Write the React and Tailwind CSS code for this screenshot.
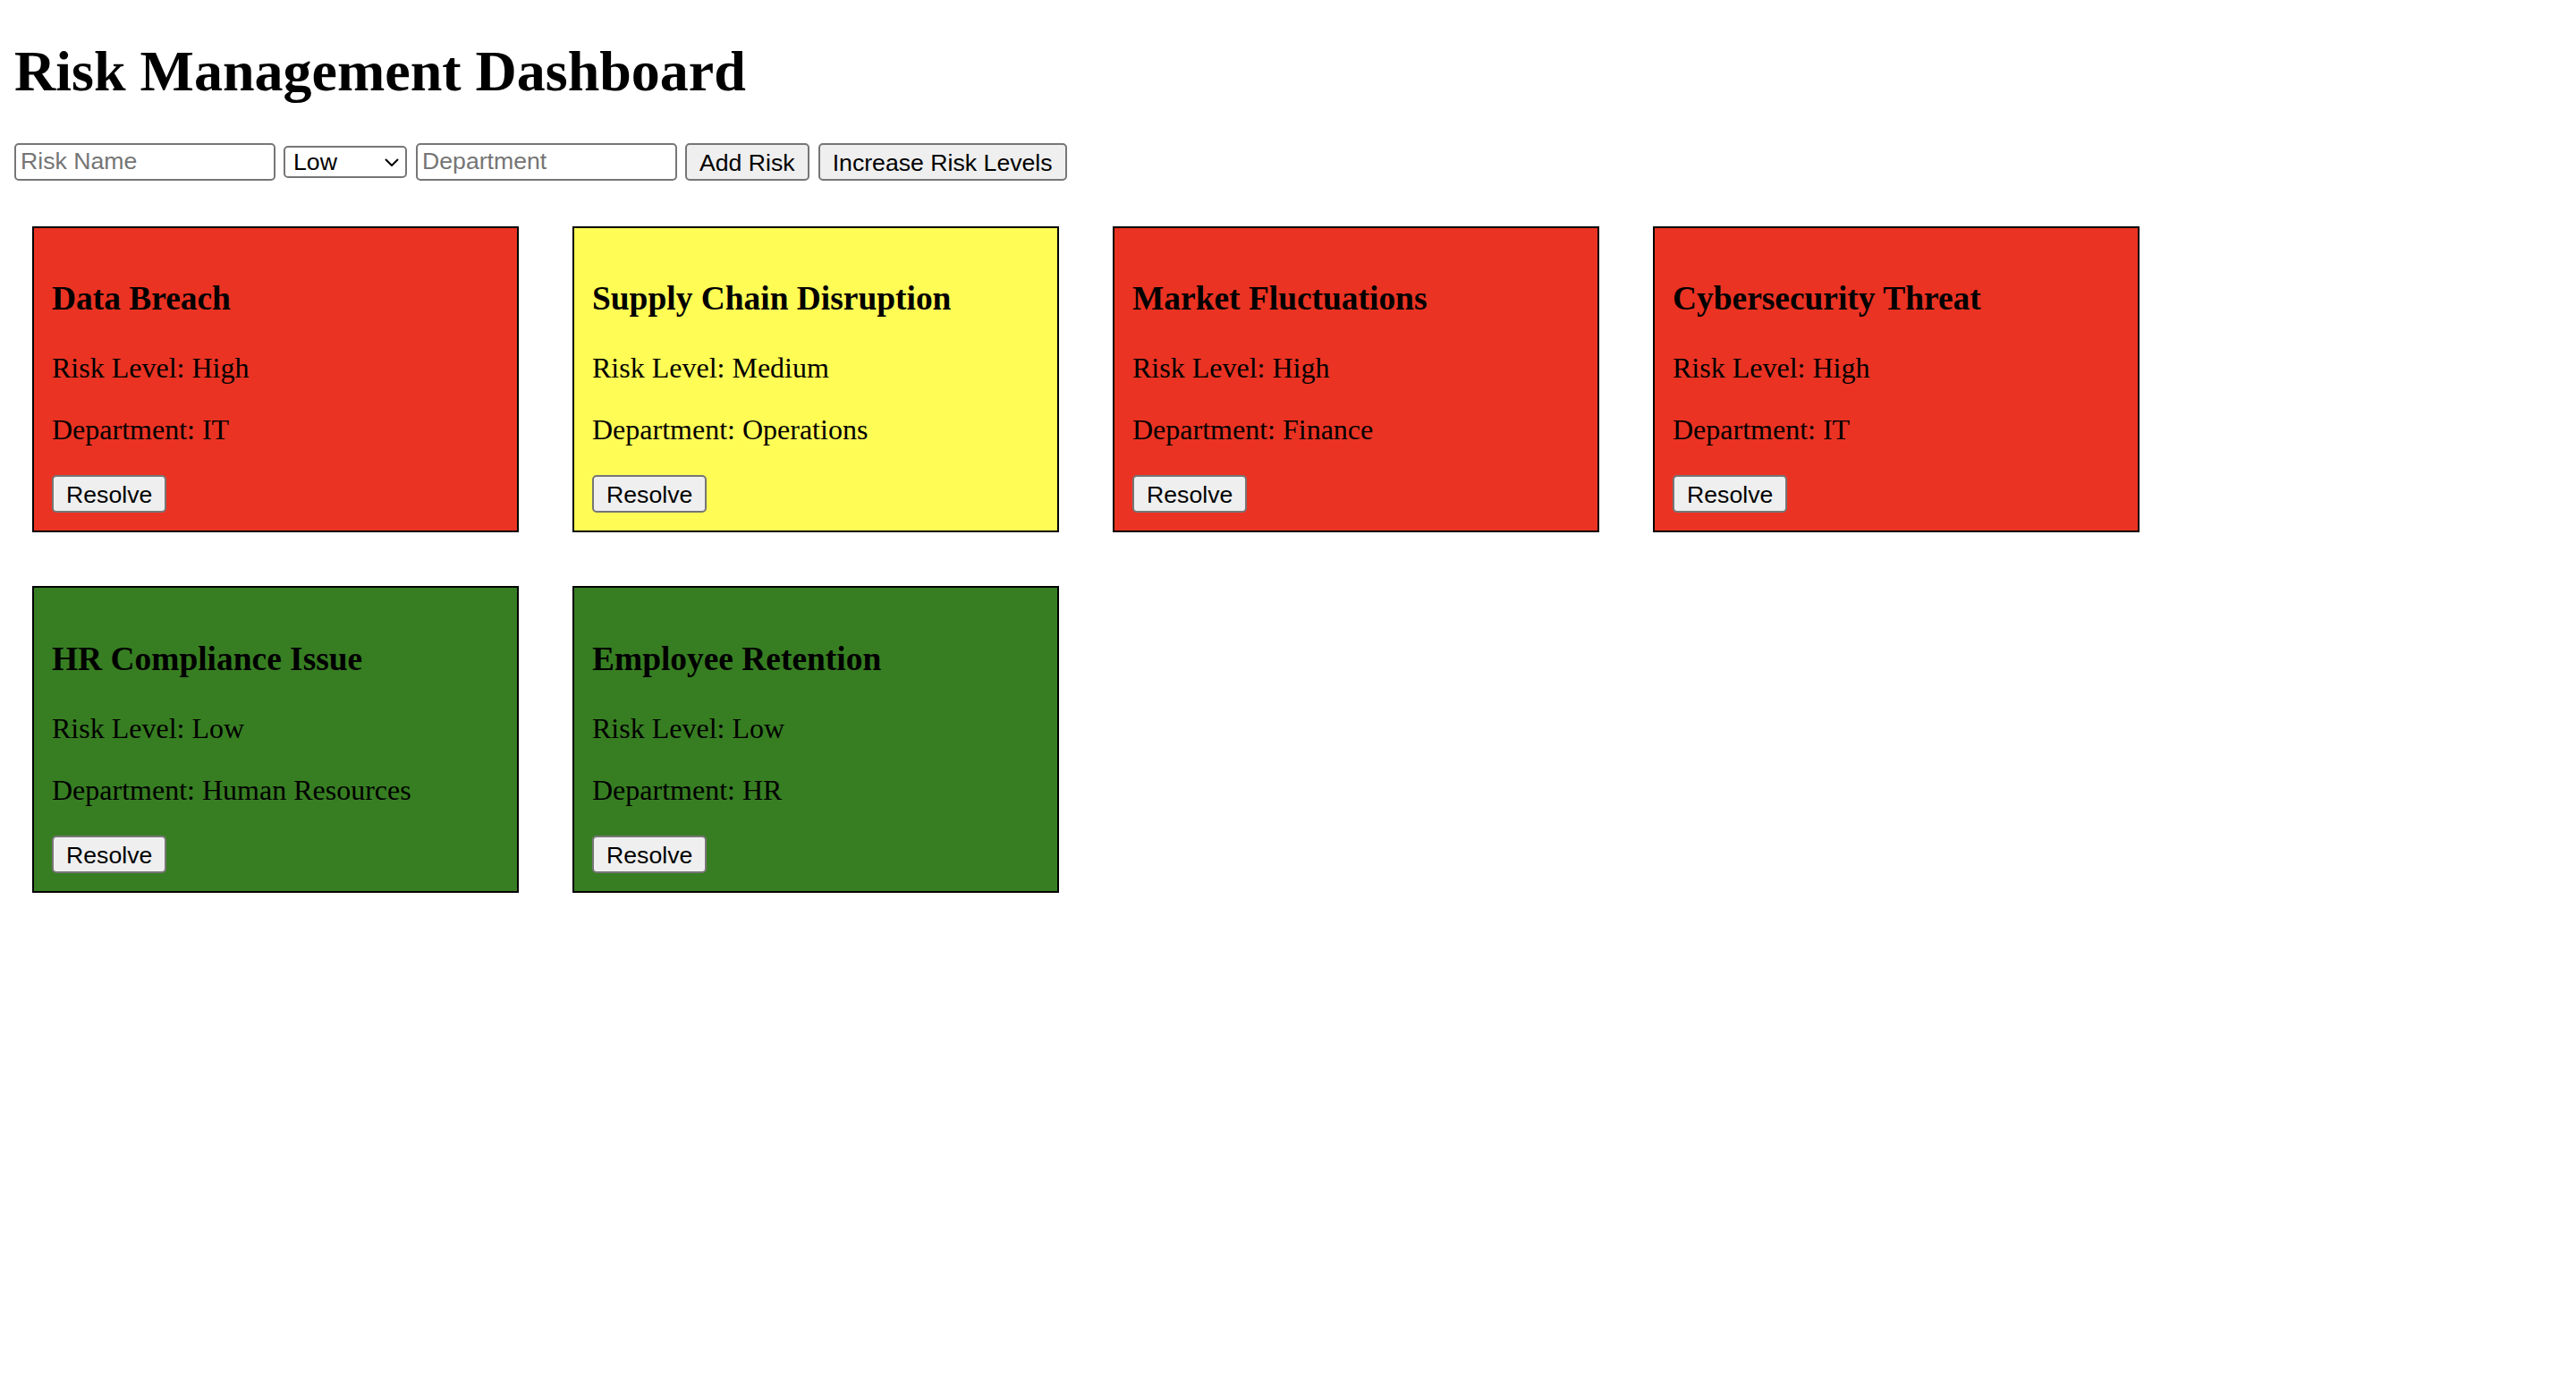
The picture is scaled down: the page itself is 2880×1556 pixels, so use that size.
import React from 'react';

const risks = [
    { id: 1, name: 'Data Breach', level: 'High', department: 'IT' },
    { id: 2, name: 'Supply Chain Disruption', level: 'Medium', department: 'Operations' },
    { id: 3, name: 'Market Fluctuations', level: 'High', department: 'Finance' },
    { id: 4, name: 'Cybersecurity Threat', level: 'High', department: 'IT' },
    { id: 5, name: 'HR Compliance Issue', level: 'Low', department: 'Human Resources' },
    { id: 6, name: 'Employee Retention', level: 'Low', department: 'HR' },
];

const levelColor = {
    High: 'bg-[#EA3323]',
    Medium: 'bg-[#FFFC55]',
    Low: 'bg-[#377E22]',
};

const controlBase = "h-[42px] border-2 border-[#767676] rounded-[5px] font-['Liberation_Sans',Arial,sans-serif] text-[26.67px] text-black";

function RiskCard({ risk }) {
    return (
        <div className={`w-[544px] border-2 border-black p-[20px] ${levelColor[risk.level]}`}>
            <h3 className="mt-[37.5px] mb-[37px] text-[37.44px] font-bold leading-[44px]">{risk.name}</h3>
            <p className="mb-[32px] text-[32px] leading-[37px]">Risk Level: {risk.level}</p>
            <p className="mb-[32px] text-[32px] leading-[37px]">Department: {risk.department}</p>
            <button className={`${controlBase} bg-[#efefef] px-[14px] block`}>Resolve</button>
        </div>
    );
}

export default function App() {
    return (
        <div className="min-h-screen bg-white text-black px-[16px] pt-[43px] font-['Liberation_Serif','Times_New_Roman',serif]">
            <h1 className="text-[64px] font-bold leading-[73.6px] mb-[43px]">Risk Management Dashboard</h1>

            {/* Form row */}
            <div className="flex items-center h-[42px]">
                <input
                    type="text"
                    placeholder="Risk Name"
                    className={`${controlBase} w-[292px] px-[5px] bg-white placeholder:text-[#757575] outline-none`}
                />
                <div className="relative ml-[9px] h-[36px]">
                    <select
                        defaultValue="Low"
                        className="appearance-none w-[138px] h-[36px] border-2 border-[#767676] rounded-[5px] bg-white pl-[9px] py-0 leading-[30px] font-['Liberation_Sans',Arial,sans-serif] text-[26.67px] text-black outline-none"
                    >
                        <option>Low</option>
                        <option>Medium</option>
                        <option>High</option>
                    </select>
                    <svg className="absolute right-[9px] top-[14px] pointer-events-none" width="16" height="9" viewBox="0 0 16 9" fill="none">
                        <path d="M1 1 L8 8 L15 1" stroke="#000" strokeWidth="2" />
                    </svg>
                </div>
                <input
                    type="text"
                    placeholder="Department"
                    className={`${controlBase} ml-[10px] w-[292px] px-[5px] bg-white placeholder:text-[#757575] outline-none`}
                />
                <button className={`${controlBase} ml-[9px] bg-[#efefef] px-[14px]`}>Add Risk</button>
                <button className={`${controlBase} ml-[10px] bg-[#efefef] px-[14px]`}>Increase Risk Levels</button>
            </div>

            {/* Cards */}
            <div className="flex flex-wrap gap-[60px] pl-[20px] mt-[51px] w-[2440px]">
                {risks.map(r => (
                    <RiskCard key={r.id} risk={r} />
                ))}
            </div>
        </div>
    );
}
